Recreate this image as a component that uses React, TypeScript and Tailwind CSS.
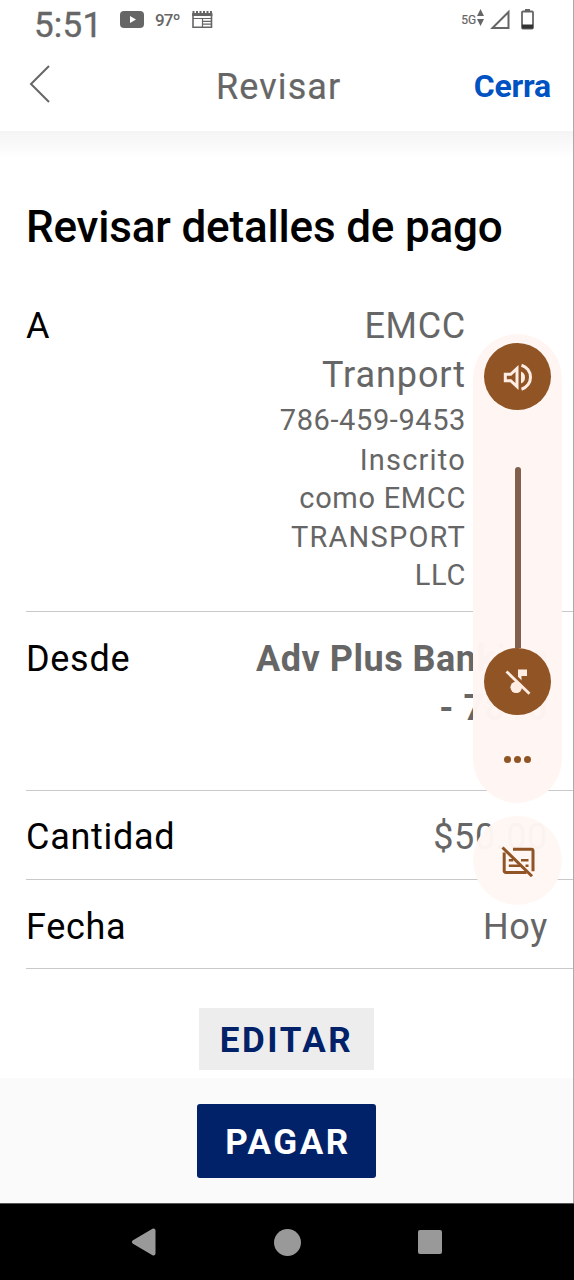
import type { ReactNode } from 'react'

function StatusBar() {
  return (
    <div className="flex h-10 items-start justify-between pl-[34px] pr-[40px] text-[#666]">
      <div className="flex items-start">
        <span className="mt-[5px] w-[86px] text-[35px] leading-[41px] tracking-[0.2px] [-webkit-text-stroke:0.4px_#666]">5:51</span>
        <svg className="mt-[11px]" width="24" height="17" viewBox="0 0 24 17">
          <rect width="24" height="17" rx="4" fill="#666" />
          <path d="M10 5l6 3.500-6 3.500z" fill="#fff" />
        </svg>
        <span className="ml-[11px] mt-[10px] w-[37px] text-[17px] leading-5 font-medium tracking-[-0.8px]">97º</span>
        <svg className="mt-[10px]" width="21" height="19" viewBox="0 0 21 19" fill="none" stroke="#666">
          <path d="M1 4v13.200h18.500V4" strokeWidth="1.600" />
          <path d="M.2 4.500h20.200" strokeWidth="3" />
          <path d="M1.500 1v3M5 1v3M8.500 1v3M12 1v3M15.500 1v3M19 1v3" strokeWidth="2" />
          <path d="M1 8.500h19M10.500 8.500v8.500M11 11.300h8.500M11 14.200h8.500" strokeWidth="1.200" />
        </svg>
      </div>
      <div className="flex items-start">
        <span className="mt-[13px] text-[12px] leading-[14px] tracking-[-0.1px] [-webkit-text-stroke:0.2px_#666]">5G</span>
        <svg className="ml-px mt-[9px]" width="7" height="17" viewBox="0 0 7 17" fill="#666">
          <path d="M3.500 0L7 7H0zM3.500 17L0 10h7z" />
        </svg>
        <svg className="ml-[6px] mt-[9px]" width="20" height="21" viewBox="0 0 20 21" fill="none" stroke="#666" strokeWidth="2">
          <path d="M2.500 19L18.500 3v16z" />
        </svg>
        <svg className="ml-[11px] mt-[9px]" width="13" height="21" viewBox="0 0 13 21">
          <rect x="1" y="2.500" width="11" height="17" rx="1" fill="none" stroke="#666" strokeWidth="1.800" />
          <path d="M4 0h5v2.500H4z" fill="#666" />
          <path d="M1 15.500h11v4H1z" fill="#333" />
        </svg>
      </div>
    </div>
  )
}

function Row({ label, className = '', children }: { label: string; className?: string; children: ReactNode }) {
  return (
    <div className={`ml-[26px] flex justify-between border-b border-[#c9c9c9] pr-[26px] text-[36px] leading-[49px] tracking-[0.7px] ${className}`}>
      <span>{label}</span>
      <div className="text-right text-[#666]">{children}</div>
    </div>
  )
}

function VolumePanel() {
  return (
    <div className="absolute left-[473px] top-[334px] flex w-[89px] flex-col items-center">
      <div className="flex h-[469px] w-full flex-col items-center rounded-full bg-[#fff6f3]/98 pt-[9px]">
        <div className="flex size-[67px] items-center justify-center rounded-full bg-[#905425]">
          <svg width="30" height="28" viewBox="0 0 30 28" fill="none" stroke="#ffede4" strokeWidth="3">
            <path d="M2.300 11.300h5.400L14 5.500v18L7.700 17.700H2.300z" />
            <path d="M18 8.500a6.500 6.500 0 0 1 0 12z" fill="#ffede4" stroke="none" />
            <path d="M18.500 2.200a12.500 12.500 0 0 1 0 24" />
          </svg>
        </div>
        <div className="mt-[57px] h-[181px] w-[6px] rounded-t-full bg-[#805f4d]" />
        <div className="flex size-[67px] items-center justify-center rounded-full bg-[#905425]">
          <svg width="26" height="28" viewBox="0 0 26 28" fill="#ffede4">
            <path d="M13 1.500h9V8h-5.500v6.500L13 11z" />
            <circle cx="11.200" cy="19.300" r="5.800" />
            <path d="M3.500 1.500l23 22.500" stroke="#905425" strokeWidth="3" />
            <path d="M1.500 3.500l23 22.300" stroke="#ffede4" strokeWidth="2.800" />
          </svg>
        </div>
        <div className="mt-[41px] flex gap-[3px]">
          <span className="size-[7px] rounded-full bg-[#905425]" />
          <span className="size-[7px] rounded-full bg-[#905425]" />
          <span className="size-[7px] rounded-full bg-[#905425]" />
        </div>
      </div>
      <div className="mt-[13px] flex size-[89px] items-center justify-center rounded-full bg-[#fff7f4]/97">
        <svg width="34" height="35" viewBox="0 0 34 35" fill="none" stroke="#905425" strokeWidth="3">
          <path d="M12 6.300h18.500a1.500 1.500 0 0 1 1.500 1.500v20.500M3.200 9.500v18.500a1.500 1.500 0 0 0 1.500 1.500H25.500" />
          <path d="M7.800 17.300h4.400M20 17.300h7.500M7.800 22.800h12M24.500 22.800h3" strokeWidth="2.500" />
          <path d="M1.500 4.500l29.500 28.800" />
        </svg>
      </div>
    </div>
  )
}

export default function App() {
  return (
    <div className="relative flex h-[1280px] w-[574px] flex-col overflow-hidden bg-white font-[Roboto,sans-serif] text-black">
      <StatusBar />

      <header className="flex h-[91px] items-center pl-[29px] pr-[23px]">
        <svg className="-mt-[3px]" width="22" height="38" viewBox="0 0 22 38" fill="none" stroke="#666" strokeWidth="2">
          <path d="M20 1L2 19l18 18" />
        </svg>
        <h1 className="ml-[165px] mt-[2px] text-[36px] tracking-[1.1px] text-[#666] [-webkit-text-stroke:0.2px_#666]">Revisar</h1>
        <button className="ml-auto text-[32px] font-bold tracking-[-0.2px] text-[#0052c2]">Cerra</button>
      </header>

      <main className="flex-1 bg-linear-to-b from-[#f4f4f4] to-white to-[28px]">
        <h2 className="ml-[26px] mt-[70px] text-[44px] leading-[52px] font-medium tracking-[-0.18px]">Revisar detalles de pago</h2>

        <Row label="A" className="h-[359px] pt-[49px]">
          <div className="mr-[82px]">
            <p>EMCC</p>
            <p className="tracking-[0.9px]">Tranport</p>
            <div className="mt-px text-[29px] leading-[38.500px]">
              <p className="mb-px tracking-[0.6px]">786-459-9453</p>
              <p className="tracking-[1.2px]">Inscrito</p>
              <p>como EMCC</p>
              <p className="tracking-[1.2px]">TRANSPORT</p>
              <p>LLC</p>
            </div>
          </div>
        </Row>
        <Row label="Desde" className="h-[179px] pt-[23px]">
          <p className="font-bold tracking-[0.5px]">Adv Plus Banking</p>
          <p className="font-bold tracking-[0.5px]">- 7810</p>
        </Row>
        <Row label="Cantidad" className="h-[89px] pt-[22px]">$50.00</Row>
        <Row label="Fecha" className="h-[89px] pt-[23px]">Hoy</Row>

        <button className="ml-[199px] mt-[39px] flex h-[62px] w-[175px] items-center justify-center bg-[#ededed] pt-1 text-[35px] font-bold tracking-[2.6px] text-[#012169]">
          EDITAR
        </button>
      </main>

      <div className="flex h-[125px] items-center justify-center bg-[#fafafa] pr-px">
        <button className="h-[74px] w-[179px] rounded-[3px] bg-[#012169] pl-[3px] pt-[5px] text-[35px] font-bold tracking-[2.600px] text-white">PAGAR</button>
      </div>

      <nav className="flex h-[77px] items-center justify-between border-t border-[#555] bg-black pl-[131px] pr-[132px]">
        <svg width="25" height="28" viewBox="0 0 25 28" fill="#999" stroke="#999" strokeWidth="4" strokeLinejoin="round">
          <path d="M3 14L22.500 2.500v23z" />
        </svg>
        <span className="size-[27px] rounded-full bg-[#999]" />
        <span className="size-[24px] rounded-[2px] bg-[#999]" />
      </nav>

      <div className="absolute right-0 top-0 h-[1203px] w-px bg-[#aaa]" />
      <VolumePanel />
    </div>
  )
}
